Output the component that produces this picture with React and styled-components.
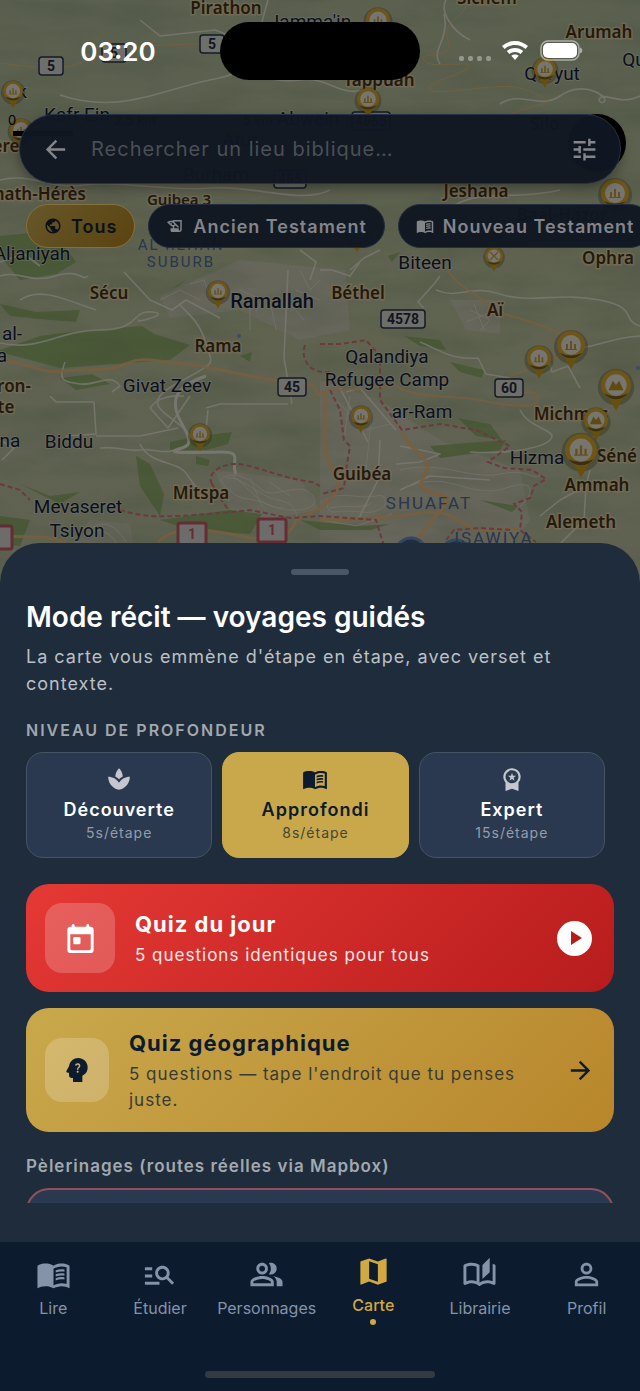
import {useState} from "react"
import styled, {createGlobalStyle} from "styled-components"
import {
    MdArrowBack,
    MdArrowForward,
    MdHistoryEdu,
    MdManageSearch,
    MdMap,
    MdOutlineAutoStories,
    MdOutlinePeopleAlt,
    MdPersonOutline,
    MdPlayArrow,
    MdPsychologyAlt,
    MdPublic,
    MdSpa,
    MdTune,
    MdWorkspacePremium,
} from "react-icons/md"

// left page filled, lines on the right page
function BookIcon() {
    return (
        <svg width="1em" height="1em" viewBox="0 0 24 24" fill="currentColor" aria-hidden="true">
            <path fillRule="evenodd" d="M1 6c1.450-1.100 3.550-1.500 5.500-1.500S10.550 4.900 12 6c1.450-1.100 3.550-1.500 5.500-1.500S21.550 4.900 23 6v15.500c-1.500-1-3.600-1.500-5.500-1.500-1.700 0-4.150.65-5.500 1.500C10.550 20.400 8.450 20 6.500 20S2.500 20.500 1 21.500zM21 7c-1.100-.35-2.300-.5-3.500-.5-1.700 0-4.150.65-5.500 1.500v11.500c1.350-.85 3.800-1.500 5.500-1.500 1.200 0 2.400.15 3.500.5z" />
            <path d="M13.500 10.700c1.800-.8 4.200-1 6-.6v-1.500c-1.900-.4-4.200-.2-6 .5zM13.500 13.400c1.800-.8 4.200-1 6-.6v-1.500c-1.900-.4-4.200-.2-6 .5zM13.500 16.100c1.800-.8 4.200-1 6-.6V14c-1.900-.4-4.200-.2-6 .5z" />
        </svg>
    )
}

function TodayIcon() {
    return (
        <svg width="1em" height="1em" viewBox="0 0 24 24" fill="currentColor" aria-hidden="true">
            <path fillRule="evenodd" d="M19 4h-1V3c0-.55-.45-1-1-1s-1 .45-1 1v1H8V3c0-.55-.45-1-1-1s-1 .45-1 1v1H5c-1.110 0-2 .9-2 2v14c0 1.100.9 2 2 2h14c1.100 0 2-.9 2-2V6c0-1.100-.9-2-2-2zm-1 16H6c-.55 0-1-.45-1-1V9h14v10c0 .55-.45 1-1 1z" />
            <rect x="7" y="11" width="5" height="5" rx="1" />
        </svg>
    )
}

const filters = [
    {id: "all", label: "Tous", Icon: MdPublic},
    {id: "old", label: "Ancien Testament", Icon: MdHistoryEdu},
    {id: "new", label: "Nouveau Testament", Icon: BookIcon},
]

const levels = [
    {id: "decouverte", label: "Découverte", time: "5s/étape", Icon: MdSpa},
    {id: "approfondi", label: "Approfondi", time: "8s/étape", Icon: BookIcon},
    {id: "expert", label: "Expert", time: "15s/étape", Icon: MdWorkspacePremium},
]

const tabs = [
    {id: "lire", label: "Lire", Icon: BookIcon},
    {id: "etudier", label: "Étudier", Icon: MdManageSearch},
    {id: "personnages", label: "Personnages", Icon: MdOutlinePeopleAlt},
    {id: "carte", label: "Carte", Icon: MdMap},
    {id: "librairie", label: "Librairie", Icon: MdOutlineAutoStories},
    {id: "profil", label: "Profil", Icon: MdPersonOutline},
]

// modern towns
const towns = [
    [310, 28, "Jamma'in"], [150, -6, "Urif"], [22, 98, "k"], [77, 121, "Kafr Ein"],
    [32, 260, "Aljaniyah"], [425, 269, "Biteen"], [552, 80, "Qaryut"], [634, 66, "Qu"],
    [167, 392, "Givat Zeev"], [387, 363, "Qalandiya"], [387, 386, "Refugee Camp"],
    [422, 418, "ar-Ram"], [69, 448, "Biddu"], [78, 513, "Mevaseret"], [77, 537, "Tsiyon"],
    [537, 464, "Hizma"], [12, 340, "al-"], [2, 362, "a"], [10, 447, "na"],
    [216, 181, "Burham"], [308, 125, "Abwein"], [240, 146, "Atur"],
]

// biblical places
const places = [
    [226, 14, "Pirathon"], [487, 4, "Sichem"], [599, 38, "Arumah"], [379, 86, "Tappuah"],
    [37, 200, "math-Hérès"], [179, 205, "Guibea 3"], [476, 197, "Jeshana"], [6, 152, "ère"],
    [109, 299, "Sécu"], [358, 299, "Béthel"], [608, 264, "Ophra"], [495, 316, "Aï"],
    [218, 352, "Rama"], [14, 392, "ron-"], [6, 413, "te"], [201, 499, "Mitspa"],
    [362, 480, "Guibéa"], [571, 420, "Michmas"], [617, 462, "Séné"], [597, 491, "Ammah"],
    [581, 528, "Alemeth"], [545, 130, "Silo"], [562, 221, "Baal-Hazor"],
]

const shields = [
    [51, 66, 24, "5"], [114, 53, 24, "5"], [212, 44, 24, "5"], [371, 121, 38, "4665"],
    [290, 179, 32, "465"], [403, 319, 44, "4578"], [292, 387, 28, "45"], [509, 388, 28, "60"],
]

// x, y of the disc, its radius, what is drawn in it
const pins = [
    [13, 91, 10, "city"], [21, 130, 11, "city"], [378, 20, 12, "city"], [368, 99, 11, "city"],
    [545, 69, 11, "city"], [615, 193, 14, "city"], [357, 235, 10, "city"], [494, 256, 9, "cross"],
    [218, 291, 10, "city"], [200, 434, 10, "city"], [361, 416, 10, "city"], [539, 358, 12, "city"],
    [571, 345, 14, "city"], [616, 385, 15, "mount"], [596, 420, 12, "mount"], [581, 450, 16, "city"],
]

const minorRoads = [
    "M0 180 C30 172 50 190 84 185 S170 192 210 188 S300 205 330 190",
    "M60 95 C120 115 160 90 210 80 S250 60 268 0",
    "M140 20 L160 36 L215 30 L262 48",
    "M0 276 C18 270 30 284 55 276 S82 282 88 276",
    "M0 343 C40 352 58 330 100 330 S130 310 152 312 S130 324 140 320",
    "M65 362 C58 380 62 382 80 384 S110 372 120 386 L112 392",
    "M50 396 L56 402 L94 402 L96 434 L66 436",
    "M96 436 L140 436 L178 428",
    "M0 440 L14 448 L2 460 M140 444 C150 466 180 460 188 476 L198 490",
    "M100 448 C120 446 128 452 140 450 S165 455 174 450",
    "M180 305 C190 316 200 322 206 344 S220 360 176 384 S178 414 192 438",
    "M206 408 L220 404 L288 404 M208 410 L206 430 M288 270 L284 358 L292 404",
    "M150 408 L168 428 L190 396 M150 408 C160 394 178 396 184 396",
    "M124 272 L150 300 L172 310 L186 300 L220 318",
    "M440 276 L434 284 L418 302 L424 308",
    "M320 270 L332 270 L350 276 L360 262",
    "M436 290 C460 300 470 284 500 294 S560 292 600 300 S620 320 640 326",
    "M420 342 C440 350 450 360 478 358 L486 374 L510 378",
    "M546 350 L552 372 L568 366 L580 388 M580 348 C600 346 610 338 640 336",
    "M520 410 C530 430 560 430 550 440 S500 454 470 452",
    "M340 388 L368 442 M346 392 L360 388 L396 430 M380 440 L378 480 L358 520",
    "M400 446 L440 454 L420 462 L396 464 M400 490 L430 476 L490 480",
    "M540 516 L560 500 L586 486 L590 470 M586 486 L584 520 L560 544",
    "M470 40 C450 30 440 10 446 0 M444 14 C450 40 430 50 440 64",
    "M520 240 C560 250 600 240 640 244 M455 205 C480 190 520 200 560 190",
    "M0 262 L24 254 L40 266 M20 300 C40 286 66 300 96 310",
    "M260 60 C240 70 270 84 300 80 S340 100 370 88",
    "M500 104 C520 90 540 110 560 96 S600 92 604 98 S596 104 600 98 S620 106 640 96",
    "M380 250 L364 258 L350 270 M300 250 L316 262 L310 280",
]

const suburbs = [
    "M220 480 C235 468 250 480 262 490 S300 480 312 495 S290 515 270 505 S240 506 220 480",
    "M226 478 C244 476 256 496 278 500 S300 520 290 530",
    "M232 476 C248 484 260 510 284 508 M250 478 L262 506 M270 482 L290 496",
    "M326 500 C340 490 360 500 376 496 S390 516 360 512 S330 520 326 500",
    "M330 508 C350 504 366 510 372 502 M322 520 L356 526 L392 514",
    "M400 470 C440 460 470 480 500 474 S530 480 540 476",
    "M410 486 C450 470 470 500 506 488 S530 500 520 506",
    "M290 312 L306 296 M296 290 L320 300 M286 300 L304 320 M270 300 L276 330",
    "M250 300 L250 330 M240 290 L262 300 L256 312 M300 270 L310 290 L320 280",
    "M336 400 L360 424 M350 396 L344 440 M366 430 L390 424 M372 410 L366 470",
    "M200 300 L180 290 L160 300 M210 296 L204 280 L190 284",
    "M90 530 C104 516 120 530 126 542 M84 536 C100 524 112 534 118 546",
    "M470 310 L490 320 L480 330 M466 322 L496 310 M474 304 L484 330",
]

const borders = [
    "M305 345 C300 360 310 374 330 372 M320 344 L340 344 L366 340 L380 356 L380 400 L402 430 L440 424 L476 430 L510 446 L488 462 L504 468 L532 470 L546 479 L534 486 L530 498 L514 504 L522 512 L520 530 L536 542",
    "M330 390 L340 410 L344 440 L350 446 L346 470 L344 488 L322 494",
    "M0 484 L20 490 L30 500 M120 510 C150 520 180 516 232 512 L250 510 L290 518 L320 516 L376 520 L384 546",
    "M212 484 C206 474 220 464 236 464 S280 478 312 482 L320 486 M212 484 L220 498 L230 512",
    "M446 540 L454 530 L480 528 L512 530",
]

function Pin({x, y, r, kind}) {
    const s = r / 14
    return (
        <g transform={`translate(${x} ${y}) scale(${s})`}>
            <circle cy="2" r="17" fill="#2a2812" opacity=".35" />
            <path d="M-8 10 L0 24 L8 10Z" fill="#66500f" />
            <circle r="14" fill="#6d5617" />
            <path d="M-11 8 A14 14 0 0 0 11 8 Q0 13 -11 8" fill="#3a3011" />
            <circle r="10" fill="#77756f" />
            {kind === "city" && <path d="M-5 -1h2v5h-2zM-1 -4h2v8h-2zM3 -1h2v5h-2zM-6 4h12v1h-12z" fill="#66501a" />}
            {kind === "mount" && <path d="M-7 5 L-3 -4 L0 0 L3 -4 L7 5Z" fill="#5f4a10" />}
            {kind === "cross" && <path d="M-6 -6 L6 6 M6 -6 L-6 6" stroke="#66501a" strokeWidth="2" />}
        </g>
    )
}

function MapDrawing() {
    return (
        <MapSvg viewBox="0 0 640 600" preserveAspectRatio="xMidYMin slice" aria-hidden="true">
            <defs>
                <filter id="relief" x="0" y="0" width="100%" height="100%" colorInterpolationFilters="sRGB">
                    <feTurbulence type="fractalNoise" baseFrequency=".012 .04" numOctaves="4" seed="8" />
                    <feColorMatrix values="0 0 0 0 .25  0 0 0 0 .29  0 0 0 0 .22  1.8 0 0 0 -.72" />
                </filter>
                <linearGradient id="land" x1="0" y1="0" x2="0" y2="1">
                    <stop offset="0" stopColor="#5b604f" />
                    <stop offset=".55" stopColor="#5f6350" />
                    <stop offset="1" stopColor="#5f6252" />
                </linearGradient>
            </defs>
            <rect width="640" height="600" fill="url(#land)" />
            <g fill="#6a695f" opacity=".7">
                <path d="M240 260 L345 270 L350 330 L300 340 L240 310 L170 318 L160 296Z" />
                <path d="M320 380 L380 400 L440 440 L520 470 L530 520 L500 560 L320 550Z" />
                <path d="M215 470 L300 480 L320 510 L260 520 L230 510Z" />
                <path d="M90 520 L130 524 L136 560 L60 560Z M450 300 L500 300 L500 334 L466 330Z" />
            </g>
            <g fill="#44562f" opacity=".75">
                <path d="M0 350 L40 336 L70 332 L142 326 L154 334 L190 345 L170 360 L60 368 L0 352Z" />
                <path d="M0 236 L40 232 L60 240 L76 262 L56 274 L20 280 L0 256Z" />
                <path d="M0 304 L36 312 L80 310 L76 322 L50 320 L10 316Z" />
                <path d="M60 378 L92 374 L110 384 L76 390Z M136 456 L150 464 L164 494 L160 516 L140 486Z" />
                <path d="M170 442 L200 436 L232 432 L228 444 L206 450 L170 450Z M196 456 L210 460 L208 466 L196 464Z" />
                <path d="M160 520 L230 510 L262 514 L250 534 L190 530Z M20 484 L50 496 L80 492 L60 504Z" />
                <path d="M404 336 L440 340 L446 350 L420 346Z M450 362 L484 370 L482 378 L460 372Z" />
                <path d="M458 418 L490 424 L502 440 L476 436Z M430 446 L506 440 L500 450 L440 458Z" />
                <path d="M300 520 L360 526 L390 524 L370 530 L320 530Z M480 500 L518 506 L512 512Z M0 516 L30 520 L20 546 L0 544Z" />
                <path d="M172 288 L186 280 L178 286Z M388 256 L400 252 L392 262Z M240 356 L252 352 L250 362Z" />
            </g>
            <rect width="640" height="600" filter="url(#relief)" opacity=".3" />
            <g fill="none" stroke="#76756e" strokeWidth="1" opacity=".7">
                {suburbs.map((d) => <path key={d} d={d} />)}
            </g>
            <g fill="none" stroke="#7a7972" strokeWidth="1.6" strokeLinejoin="round" opacity=".8">
                {minorRoads.map((d) => <path key={d} d={d} />)}
            </g>
            <path d="M206 376 C176 386 168 400 182 424 S186 446 176 450 S200 452 222 452 S230 462 236 474" fill="none" stroke="#77766f" strokeWidth="3" />
            <g fill="none" stroke="#775f40" strokeWidth="2" opacity=".85">
                <path d="M0 63 C30 66 45 70 65 67 S95 52 130 48 S190 44 220 44" strokeWidth="1" />
                <path d="M466 0 C470 16 440 20 448 40 S420 50 424 60 S470 60 470 66 S420 84 430 90 S500 82 520 88 S548 100 548 102 L510 114" strokeWidth="1" />
                <path d="M8 361 C30 364 42 374 64 371 S106 372 120 366 S140 358 160 361 S190 364 212 368 S250 378 290 382 S310 392 320 396" strokeWidth="3" />
                <path d="M448 270 C456 286 478 294 490 306 S540 320 564 336 S540 364 510 376" />
                <path d="M320 392 C340 390 360 388 396 386 C420 400 450 394 480 400 S540 410 538 398 S520 396 510 394" />
                <path d="M324 390 C328 420 318 450 334 470 S320 506 320 510 M402 432 C410 452 434 458 426 472 S418 490 440 494 S426 520 418 540" strokeWidth="4" />
                <path d="M320 520 C350 520 390 518 428 512 C452 510 460 526 480 530 S510 526 520 530" strokeWidth="3" />
                <path d="M0 536 C30 538 40 534 66 542 M158 542 C180 522 210 530 240 536 S290 540 296 520 L320 508" strokeWidth="3" />
            </g>
            <g fill="none" stroke="#6c3a3d" strokeWidth="2" strokeDasharray="5 3">
                {borders.map((d) => <path key={d} d={d} />)}
            </g>
            <g fill="#3d4c66">
                <circle cx="239" cy="336" r="2" />
                <circle cx="638" cy="368" r="2" />
            </g>
            <g fill="#1f2e42" stroke="#36485f" strokeWidth="3">
                <circle cx="411" cy="553" r="15" />
                <circle cx="456" cy="555" r="15" />
            </g>
            <circle cx="597" cy="143" r="29" fill="#000" />
            {shields.map(([x, y, w, label]) => (
                <g key={label + x}>
                    <rect x={x - w / 2} y={y - 9} width={w} height="18" rx="3" fill="#6e6e6a" stroke="#151b26" strokeWidth="1.5" />
                    <ShieldText x={x} y={y + 5}>{label}</ShieldText>
                </g>
            ))}
            {[[-2, 537], [192, 534], [272, 530]].map(([x, y]) => (
                <g key={x}>
                    <rect x={x - 14} y={y - 11} width="28" height="23" rx="2" fill="#6e6c6a" stroke="#652d33" strokeWidth="3" />
                    {x > 0 && <ShieldText x={x} y={y + 5} $red>1</ShieldText>}
                </g>
            ))}
            {places.map(([x, y, label]) => <PlaceText key={label} x={x} y={y} $small={label === "Guibea 3"}>{label}</PlaceText>)}
            {towns.map(([x, y, label]) => <TownText key={label + x} x={x} y={y}>{label}</TownText>)}
            <TownText x="272" y="308" $big>Ramallah</TownText>
            <AreaText x="181" y="250">AL REHAN</AreaText>
            <AreaText x="181" y="267">SUBURB</AreaText>
            <AreaText x="429" y="509" $wide>SHUAFAT</AreaText>
            <AreaText x="494" y="544" $wide>ISAWIYA</AreaText>
            {pins.map(([x, y, r, kind]) => <Pin key={x} x={x} y={y} r={r} kind={kind} />)}
            <rect x="13" y="131" width="60" height="5" fill="#000" />
            <ScaleText x="12" y="125">0</ScaleText>
            <ScaleText x="135" y="125">2.5 km</ScaleText>
            <ScaleText x="258" y="125">5 km</ScaleText>
        </MapSvg>
    )
}

function StatusIcons() {
    return (
        <svg width="126" height="24" viewBox="0 0 126 24" aria-hidden="true">
            <g fill="#fff">
                <g opacity=".35">
                    {[1, 10, 19, 28].map((x) => <rect key={x} x={x} y="17" width="5" height="5" rx="2" />)}
                </g>
                <path d="M57 2c5 0 9.500 2 13 5l-2.600 3c-2.800-2.500-6.400-4-10.400-4s-7.600 1.500-10.400 4L44 7c3.500-3 8-5 13-5z" />
                <path d="M57 9c3.200 0 6 1.100 8.200 3l-2.600 3c-1.500-1.300-3.400-2-5.600-2s-4.100.7-5.600 2l-2.600-3c2.200-1.900 5-3 8.200-3z" />
                <path d="M57 15.500c1.400 0 2.700.5 3.700 1.300L57 21l-3.700-4.200c1-.8 2.300-1.300 3.700-1.300z" />
                <rect x="85" y="4" width="34" height="15" rx="5" />
                <path d="M122 8.500c1.500.6 2.300 1.800 2.300 3s-.8 2.400-2.300 3z" opacity=".5" />
            </g>
            <rect x="83" y="2" width="38" height="19" rx="7" fill="none" stroke="#fff" strokeWidth="1.5" opacity=".5" />
        </svg>
    )
}

export default function App() {
    const [filter, setFilter] = useState("all")
    const [level, setLevel] = useState("approfondi")
    const [tab, setTab] = useState("carte")
    const [query, setQuery] = useState("")

    return (
        <Page>
            <GlobalStyle />
            <MapArea>
                <MapDrawing />
                <StatusBar>
                    <Clock>03:20</Clock>
                    <Island />
                    <StatusRight><StatusIcons /></StatusRight>
                </StatusBar>
                <SearchBar>
                    <IconButton aria-label="Retour"><MdArrowBack /></IconButton>
                    <SearchInput
                        type="text"
                        aria-label="Rechercher un lieu biblique"
                        placeholder="Rechercher un lieu biblique…"
                        value={query}
                        onChange={(e) => setQuery(e.target.value)}
                    />
                    <IconButton aria-label="Filtres"><MdTune /></IconButton>
                </SearchBar>
                <Chips>
                    {filters.map(({id, label, Icon}) => (
                        <Chip key={id} $active={filter === id} onClick={() => setFilter(id)}>
                            <Icon />
                            {label}
                        </Chip>
                    ))}
                </Chips>
            </MapArea>
            <Sheet>
                <Handle />
                <Title>Mode récit — voyages guidés</Title>
                <Intro>La carte vous emmène d'étape en étape, avec verset et contexte.</Intro>
                <SectionLabel>NIVEAU DE PROFONDEUR</SectionLabel>
                <Levels>
                    {levels.map(({id, label, time, Icon}) => (
                        <Level key={id} $active={level === id} aria-pressed={level === id} onClick={() => setLevel(id)}>
                            <Icon />
                            <strong>{label}</strong>
                            <small>{time}</small>
                        </Level>
                    ))}
                </Levels>
                <Quiz $daily>
                    <QuizIcon $daily><TodayIcon /></QuizIcon>
                    <QuizText $daily>
                        <strong>Quiz du jour</strong>
                        <span>5 questions identiques pour tous</span>
                    </QuizText>
                    <Play><MdPlayArrow /></Play>
                </Quiz>
                <Quiz>
                    <QuizIcon><MdPsychologyAlt /></QuizIcon>
                    <QuizText>
                        <strong>Quiz géographique</strong>
                        <span>5 questions — tape l'endroit que tu penses juste.</span>
                    </QuizText>
                    <Arrow><MdArrowForward /></Arrow>
                </Quiz>
                <RoutesLabel>Pèlerinages (routes réelles via Mapbox)</RoutesLabel>
                <Peek><RouteCard /></Peek>
            </Sheet>
            <BottomBar>
                <Tabs>
                    {tabs.map(({id, label, Icon}) => (
                        <Tab key={id} href={`#${id}`} $active={tab === id} onClick={() => setTab(id)}>
                            <Icon />
                            <span>{label}</span>
                            {tab === id && <Dot />}
                        </Tab>
                    ))}
                </Tabs>
                <HomeIndicator />
            </BottomBar>
        </Page>
    )
}

const GlobalStyle = createGlobalStyle`
    * {
        box-sizing: border-box;
    }

    body {
        margin: 0;
        background: #0c1b2e;
        font-family: Inter, "Liberation Sans", sans-serif;
    }

    button, input {
        font-family: inherit;
    }
`

const Page = styled.div`
    display: flex;
    flex-direction: column;
    min-height: 100vh;
    overflow: hidden;
`

const MapArea = styled.header`
    position: relative;
    flex: 1;
    min-height: 280px;
    margin-bottom: -40px;
    background: #5f6450;
    overflow: hidden;
`

const MapSvg = styled.svg`
    position: absolute;
    top: 0;
    left: 0;
    width: 100%;
    height: 600px;
`

const TownText = styled.text`
    font-family: Roboto, sans-serif;
    font-size: ${(p) => (p.$big ? "20px" : "19px")};
    font-weight: ${(p) => (p.$big ? 500 : 400)};
    text-anchor: middle;
    fill: #0b0f1c;
    stroke: #74746c;
    stroke-width: 2px;
    stroke-opacity: .5;
    paint-order: stroke;
`

const PlaceText = styled.text`
    font-family: "Noto Sans", sans-serif;
    font-size: ${(p) => (p.$small ? "15px" : "17px")};
    font-weight: 600;
    text-anchor: middle;
    fill: #241a0c;
    stroke: #7d705a;
    stroke-width: 3px;
    stroke-opacity: .6;
    paint-order: stroke;
`

const AreaText = styled.text`
    font-family: Roboto, sans-serif;
    font-size: ${(p) => (p.$wide ? "17px" : "15px")};
    letter-spacing: 2px;
    text-anchor: middle;
    fill: #28364f;
`

const ShieldText = styled.text`
    font-family: Roboto, sans-serif;
    font-size: 14px;
    font-weight: 700;
    text-anchor: middle;
    fill: ${(p) => (p.$red ? "#652d33" : "#12161f")};
`

const ScaleText = styled.text`
    font-family: Inter, sans-serif;
    font-size: 13px;
    text-anchor: middle;
    fill: #000;
`

const StatusBar = styled.div`
    position: relative;
    display: grid;
    grid-template-columns: 1fr 200px 1fr;
    align-items: center;
    padding-top: 22px;
`

const Clock = styled.time`
    padding-left: 16px;
    color: #fff;
    font-size: 26px;
    font-weight: 600;
    text-align: center;
`

const Island = styled.div`
    height: 58px;
    border-radius: 29px;
    background: #000;
`

const StatusRight = styled.div`
    display: flex;
    padding-left: 38px;
`

const SearchBar = styled.div`
    position: relative;
    display: flex;
    align-items: center;
    height: 70px;
    margin: 34px 19px 0;
    padding: 0 21px;
    border: 1px solid #263245;
    border-radius: 35px;
    background: rgba(15, 23, 34, .97);
    box-shadow: 0 4px 14px rgba(0, 0, 0, .35);
`

const IconButton = styled.button`
    display: flex;
    padding: 0;
    border: none;
    background: none;
    color: #84868a;
    font-size: 29px;
    cursor: pointer;
`

const SearchInput = styled.input`
    flex: 1;
    min-width: 0;
    padding: 0 21px;
    border: none;
    outline: none;
    background: none;
    color: #84868a;
    font-size: 20px;
    letter-spacing: 1px;

    &::placeholder {
        color: #4b4f55;
        opacity: 1;
    }
`

const Chips = styled.div`
    position: relative;
    display: flex;
    gap: 13px;
    margin-top: 20px;
    padding-left: 26px;
    overflow: hidden;
`

const Chip = styled.button`
    display: flex;
    flex: none;
    align-items: center;
    gap: 9px;
    height: 44px;
    padding: 0 17px;
    border: 1px solid ${(p) => (p.$active ? "#85703b" : "#222d3f")};
    border-radius: 22px;
    background: ${(p) => (p.$active ? "linear-gradient(135deg, #66572a, #5b430f)" : "rgba(15, 23, 34, .97)")};
    color: ${(p) => (p.$active ? "#0a111b" : "#83858a")};
    font-size: 18px;
    font-weight: 600;
    letter-spacing: 1px;
    white-space: nowrap;
    cursor: pointer;
`

const Sheet = styled.main`
    position: relative;
    padding: 26px 26px 39px;
    border-radius: 40px 40px 0 0;
    background: #1f2c3b;
`

const Handle = styled.div`
    width: 58px;
    height: 6px;
    margin: 0 auto;
    border-radius: 3px;
    background: #4a5767;
`

const Title = styled.h1`
    margin: 24px 0 8px;
    color: #fff;
    font-size: 28px;
    font-weight: 600;
    line-height: 36px;
`

const Intro = styled.p`
    margin: 0 0 21px;
    color: #bcc0c4;
    font-size: 18px;
    line-height: 27px;
    letter-spacing: 1px;
`

const SectionLabel = styled.h2`
    margin: 0 0 10px;
    color: #a2a8af;
    font-size: 16px;
    font-weight: 600;
    line-height: 24px;
    letter-spacing: 2px;
`

const RoutesLabel = styled(SectionLabel)`
    font-size: 17px;
    letter-spacing: 1px;
`

const Levels = styled.div`
    display: grid;
    grid-template-columns: repeat(3, 1fr);
    gap: 10px;
    margin-right: 9px;
    margin-bottom: 26px;
`

const Level = styled.button`
    display: flex;
    flex-direction: column;
    align-items: center;
    height: 106px;
    padding: 13px 0 0;
    border: 1px solid ${(p) => (p.$active ? "#c9a84c" : "#465365")};
    border-radius: 17px;
    background: ${(p) => (p.$active ? "#c9a84c" : "#2b3950")};
    color: ${(p) => (p.$active ? "#0c1b2e" : "#fff")};
    letter-spacing: 1px;
    cursor: pointer;

    svg {
        font-size: 26px;
        color: ${(p) => (p.$active ? "#0c1b2e" : "#c4c8ce")};
    }

    strong {
        margin-top: 5px;
        font-size: 18px;
        font-weight: 600;
        line-height: 26px;
    }

    small {
        font-size: 14px;
        line-height: 20px;
        color: ${(p) => (p.$active ? "#454537" : "#959ca7")};
    }
`

const Quiz = styled.button`
    display: flex;
    align-items: center;
    gap: 20px;
    width: 100%;
    margin-bottom: ${(p) => (p.$daily ? "16px" : "22px")};
    padding: 19px;
    border: none;
    border-radius: 23px;
    background: ${(p) => (p.$daily ? "linear-gradient(135deg, #e53935, #b71c1c)" : "linear-gradient(135deg, #c9a84c, #b8862b)")};
    color: ${(p) => (p.$daily ? "#fff" : "#0c1b2e")};
    text-align: left;
    cursor: pointer;
`

const QuizIcon = styled.span`
    display: flex;
    flex: none;
    align-items: center;
    justify-content: center;
    width: ${(p) => (p.$daily ? "70px" : "64px")};
    height: ${(p) => (p.$daily ? "70px" : "64px")};
    border-radius: 17px;
    background: rgba(255, 255, 255, .2);
    font-size: ${(p) => (p.$daily ? "35px" : "32px")};
`

const QuizText = styled.span`
    display: flex;
    flex: 1;
    flex-direction: column;
    gap: 2px;
    letter-spacing: 1px;

    strong {
        font-size: 22px;
        font-weight: 700;
        line-height: 32px;
    }

    span {
        color: ${(p) => (p.$daily ? "#fbe9e9" : "#373b35")};
        font-size: 17px;
        line-height: 26px;
    }
`

const Play = styled.span`
    display: flex;
    align-items: center;
    justify-content: center;
    width: 35px;
    height: 35px;
    margin-right: 3px;
    border-radius: 50%;
    background: #fff;
    color: #b71c1c;
    font-size: 24px;
`

const Arrow = styled.span`
    display: flex;
    font-size: 29px;
`

const Peek = styled.div`
    height: 15px;
    overflow: hidden;
`

const RouteCard = styled.div`
    height: 100px;
    border: 2px solid #92505e;
    border-radius: 23px;
    background: #2b3950;
`

const BottomBar = styled.footer`
    position: relative;
    padding: 12px 0 13px;
    background: #0c1b2e;
`

const Tabs = styled.nav`
    display: grid;
    grid-template-columns: repeat(6, 1fr);
    height: 117px;
`

const Tab = styled.a`
    display: flex;
    flex-direction: column;
    align-items: center;
    padding-top: ${(p) => (p.$active ? "0" : "3px")};
    color: ${(p) => (p.$active ? "#d0a943" : "#8493a8")};
    font-size: 16px;
    font-weight: ${(p) => (p.$active ? 500 : 400)};
    line-height: 22px;
    text-decoration: none;

    svg {
        margin-bottom: 5px;
        font-size: 35px;
    }
`

const Dot = styled.i`
    width: 6px;
    height: 6px;
    margin-top: 3px;
    border-radius: 50%;
    background: #d0a943;
`

const HomeIndicator = styled.div`
    width: 36%;
    height: 7px;
    margin: 0 auto;
    border-radius: 4px;
    background: #343a42;
`
